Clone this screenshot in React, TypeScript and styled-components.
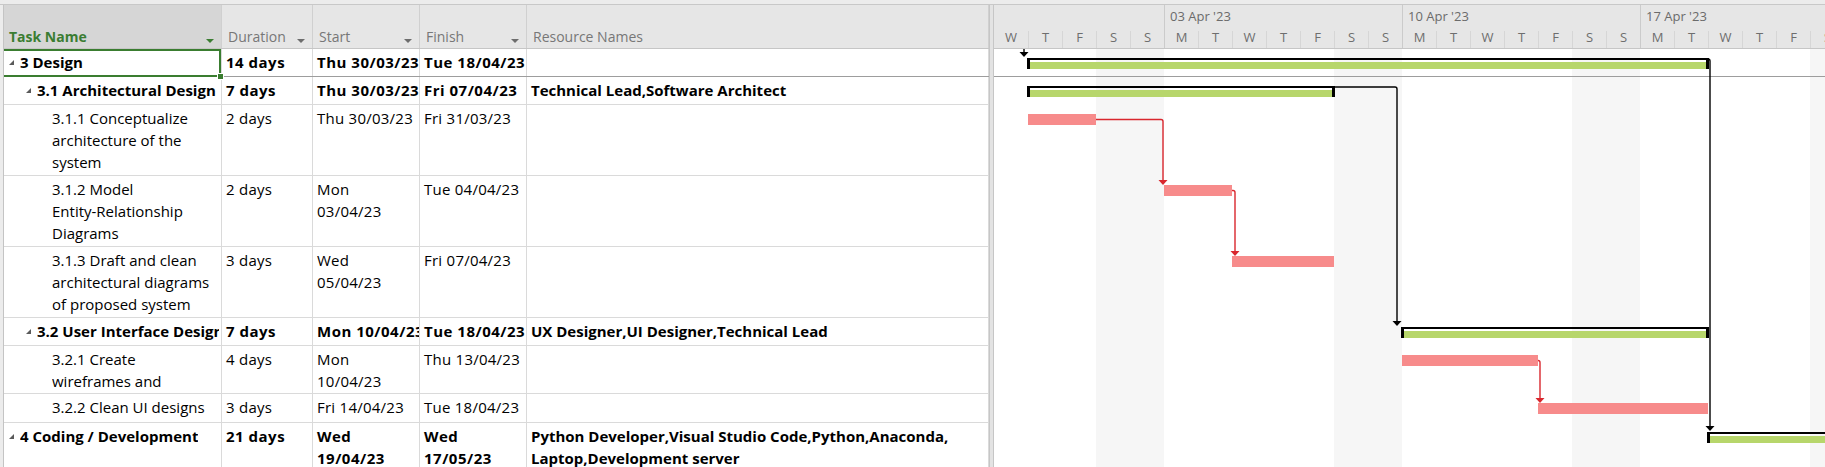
import React from 'react';
import styled, { createGlobalStyle, css } from 'styled-components';

const FONT = `'Open Sans', 'Noto Sans', 'Liberation Sans', sans-serif`;
const DAY_W = 34;
const COLS = '218px 91px 107px 107px 462px';

type Level = 0 | 1 | 2;

type TaskRow = {
  name: string[];
  level: Level;
  summary: boolean;
  duration: string;
  start: string[];
  finish: string[];
  resources: string[];
  height: number;
  dark?: boolean;
  selected?: boolean;
};

const rows: TaskRow[] = [
  { name: ['3 Design'], level: 0, summary: true, duration: '14 days', start: ['Thu 30/03/23'], finish: ['Tue 18/04/23'], resources: [], height: 28, dark: true, selected: true },
  { name: ['3.1 Architectural Design'], level: 1, summary: true, duration: '7 days', start: ['Thu 30/03/23'], finish: ['Fri 07/04/23'], resources: ['Technical Lead,Software Architect'], height: 28 },
  { name: ['3.1.1 Conceptualize', 'architecture of the', 'system'], level: 2, summary: false, duration: '2 days', start: ['Thu 30/03/23'], finish: ['Fri 31/03/23'], resources: [], height: 71 },
  { name: ['3.1.2 Model', 'Entity-Relationship', 'Diagrams'], level: 2, summary: false, duration: '2 days', start: ['Mon', '03/04/23'], finish: ['Tue 04/04/23'], resources: [], height: 71 },
  { name: ['3.1.3 Draft and clean', 'architectural diagrams', 'of proposed system'], level: 2, summary: false, duration: '3 days', start: ['Wed', '05/04/23'], finish: ['Fri 07/04/23'], resources: [], height: 71 },
  { name: ['3.2 User Interface Design'], level: 1, summary: true, duration: '7 days', start: ['Mon 10/04/23'], finish: ['Tue 18/04/23'], resources: ['UX Designer,UI Designer,Technical Lead'], height: 28 },
  { name: ['3.2.1 Create', 'wireframes and'], level: 2, summary: false, duration: '4 days', start: ['Mon', '10/04/23'], finish: ['Thu 13/04/23'], resources: [], height: 48 },
  { name: ['3.2.2 Clean UI designs'], level: 2, summary: false, duration: '3 days', start: ['Fri 14/04/23'], finish: ['Tue 18/04/23'], resources: [], height: 29 },
  { name: ['4 Coding / Development'], level: 0, summary: true, duration: '21 days', start: ['Wed', '19/04/23'], finish: ['Wed', '17/05/23'], resources: ['Python Developer,Visual Studio Code,Python,Anaconda,', 'Laptop,Development server'], height: 60 },
];

// row tops inside the chart body
const tops = rows.reduce<number[]>((acc, r, i) => {
  acc.push(i === 0 ? 0 : acc[i - 1] + rows[i - 1].height);
  return acc;
}, []);

const DAY_LETTERS = 'WTFSSMTWTFSSMTWTFSSMTWTFS'.split('');
const isWeekend = (i: number) => DAY_LETTERS[i] === 'S';

const weeks = [
  { days: 5, label: '' },
  { days: 7, label: "03 Apr '23" },
  { days: 7, label: "10 Apr '23" },
  { days: 7, label: "17 Apr '23" },
];

const summaries = [
  { row: 0, x1: 34, x2: 714 },
  { row: 1, x1: 34, x2: 340 },
  { row: 5, x1: 408, x2: 714 },
  { row: 8, x1: 714, x2: 1000 },
];

const tasks = [
  { row: 2, x1: 34, x2: 102 },
  { row: 3, x1: 170, x2: 238 },
  { row: 4, x1: 238, x2: 340 },
  { row: 6, x1: 408, x2: 544 },
  { row: 7, x1: 544, x2: 714 },
];

const links = [
  { from: 0, to: 8, x: 715, vx: 716, summary: true },
  { from: 1, to: 5, x: 341, vx: 403, summary: true },
  { from: 2, to: 3, x: 102, vx: 169, summary: false },
  { from: 3, to: 4, x: 238, vx: 241, summary: false },
  { from: 6, to: 7, x: 544, vx: 546, summary: false },
];

const GlobalStyle = createGlobalStyle`
  html, body { margin: 0; padding: 0; background: #ffffff; }
  body { font-family: ${FONT}; overflow: hidden; }
`;

const Frame = styled.div`
  width: 1825px;
  height: 467px;
  overflow: hidden;
  display: flex;
  flex-direction: column;
  background: #ffffff;
  font-family: ${FONT};
`;

const TopBand = styled.div`
  flex: none;
  height: 4px;
  background: #ececec;
  border-bottom: 1px solid #c8c8c8;
`;

const Main = styled.div`
  flex: 1;
  min-height: 0;
  display: flex;
`;

const Gutter = styled.div`
  flex: none;
  width: 3px;
  background: #ececec;
  border-right: 1px solid #c4c4c4;
`;

const TablePane = styled.div`
  flex: none;
  width: 985px;
  display: flex;
  flex-direction: column;
  overflow: hidden;
`;

const HeaderRow = styled.div`
  flex: none;
  display: grid;
  grid-template-columns: ${COLS};
  height: 44px;
  box-sizing: border-box;
  background: #e6e6e6;
  border-bottom: 1px solid #c6c6c6;
`;

const HeaderCell = styled.div<{ $active?: boolean }>`
  display: flex;
  align-items: flex-end;
  justify-content: space-between;
  padding: 0 7px 1px 6px;
  border-right: 1px solid #d0d0d0;
  font-size: 14px;
  line-height: 20px;
  color: #777777;
  white-space: nowrap;
  ${({ $active }) =>
    $active &&
    css`
      padding-left: 5px;
      background: #d6d6d6;
      color: #3b7d32;
      font-weight: 700;
    `}
`;

const SortArrow = styled.span<{ $color: string }>`
  flex: none;
  width: 0;
  height: 0;
  margin-bottom: 4px;
  border-left: 4px solid transparent;
  border-right: 4px solid transparent;
  border-top: 4px solid ${({ $color }) => $color};
`;

const Row = styled.div<{ $height: number; $dark?: boolean }>`
  flex: none;
  display: grid;
  grid-template-columns: ${COLS};
  height: ${({ $height }) => $height}px;
  box-sizing: border-box;
  border-bottom: 1px solid ${({ $dark }) => ($dark ? '#9d9d9d' : '#dadada')};
`;

const Cell = styled.div<{ $bold?: boolean; $numeric?: boolean }>`
  min-width: 0;
  padding: 2px 4px 0;
  overflow: hidden;
  white-space: nowrap;
  font-size: 15px;
  line-height: 22px;
  color: #000000;
  font-weight: ${({ $bold }) => ($bold ? 700 : 400)};
  letter-spacing: ${({ $bold, $numeric }) => ($numeric ? ($bold ? '0.5px' : '0.25px') : 'normal')};
  border-right: 1px solid #dadada;
`;

const NameCell = styled.div<{ $indent: number; $bold?: boolean; $selected?: boolean }>`
  position: relative;
  min-width: 0;
  display: flex;
  align-items: flex-start;
  padding: 2px 2px 0 ${({ $indent }) => $indent}px;
  font-size: 15px;
  line-height: 22px;
  color: #000000;
  font-weight: ${({ $bold }) => ($bold ? 700 : 400)};
  border-right: 1px solid #dadada;
  ${({ $selected }) =>
    $selected &&
    css`
      box-shadow: inset 0 0 0 2px #3a7d30;
      margin: 0 0 -1px -2px;
      padding-left: 7px;
    `}
`;

const NameText = styled.div`
  min-width: 0;
  overflow: hidden;
  white-space: nowrap;
`;

const Handle = styled.span`
  position: absolute;
  right: -3px;
  bottom: -3px;
  z-index: 2;
  width: 5px;
  height: 5px;
  background: #3a7d30;
  border: 1px solid #ffffff;
`;

const Expander = styled.svg`
  flex: none;
  width: 5px;
  height: 5px;
  margin: 9px 6px 0 0;
`;

const Splitter = styled.div`
  flex: none;
  width: 3px;
  background: #e3e3e3;
  border-left: 1px solid #c6c6c6;
  border-right: 1px solid #c6c6c6;
`;

const GanttPane = styled.div`
  flex: 1;
  min-width: 0;
  display: flex;
  flex-direction: column;
  overflow: hidden;
`;

const GanttHeader = styled.div`
  flex: none;
  height: 44px;
  box-sizing: border-box;
  display: flex;
  flex-direction: column;
  background: #e6e6e6;
  border-bottom: 1px solid #c6c6c6;
`;

const WeekTier = styled.div`
  flex: none;
  height: 26px;
  display: flex;
`;

const WeekCell = styled.div<{ $days: number; $edge: boolean }>`
  flex: none;
  width: ${({ $days }) => $days * DAY_W}px;
  box-sizing: border-box;
  padding: 3px 0 0 5px;
  font-size: 13px;
  line-height: 16px;
  color: #6b6b6b;
  white-space: nowrap;
  border-left: ${({ $edge }) => ($edge ? '1px solid #cbcbcb' : 'none')};
`;

const DayTier = styled.div`
  flex: 1;
  display: flex;
`;

const DayCell = styled.div<{ $edge: 'none' | 'day' | 'week' }>`
  flex: none;
  width: ${DAY_W}px;
  box-sizing: border-box;
  text-align: center;
  font-size: 13px;
  line-height: 12px;
  color: #6e6e6e;
  border-left: ${({ $edge }) =>
    $edge === 'none' ? 'none' : `1px solid ${$edge === 'week' ? '#cbcbcb' : '#d6d6d6'}`};
`;

const GanttBody = styled.div`
  position: relative;
  flex: 1;
  min-height: 0;
`;

const DayColumns = styled.div`
  display: flex;
  height: 100%;
`;

const DayColumn = styled.div<{ $weekend: boolean }>`
  flex: none;
  width: ${DAY_W}px;
  height: 100%;
  background: ${({ $weekend }) => ($weekend ? '#f6f6f6' : '#ffffff')};
`;

const Chart = styled.svg`
  position: absolute;
  top: 0;
  left: 0;
`;

const Lines = ({ lines }: { lines: string[] }) => (
  <>
    {lines.map((l) => (
      <div key={l}>{l}</div>
    ))}
  </>
);

const indentFor = (r: TaskRow) => (r.level === 0 ? 5 : r.level === 1 ? 22 : 48);

const TableRow = ({ row }: { row: TaskRow }) => (
  <Row $height={row.height} $dark={row.dark}>
    <NameCell $indent={indentFor(row)} $bold={row.summary} $selected={row.selected}>
      {row.summary && (
        <Expander viewBox="0 0 5 5">
          <polygon points="5,0 5,5 0,5" fill="#5a5a5a" />
        </Expander>
      )}
      <NameText>
        <Lines lines={row.name} />
      </NameText>
      {row.selected && <Handle />}
    </NameCell>
    <Cell $bold={row.summary} $numeric>
      {row.duration}
    </Cell>
    <Cell $bold={row.summary} $numeric>
      <Lines lines={row.start} />
    </Cell>
    <Cell $bold={row.summary} $numeric>
      <Lines lines={row.finish} />
    </Cell>
    <Cell $bold={row.summary}>
      <Lines lines={row.resources} />
    </Cell>
  </Row>
);

const SummaryBar = ({ x1, x2, y }: { x1: number; x2: number; y: number }) => (
  <g shapeRendering="crispEdges">
    <rect x={x1 - 1} y={y + 9} width={x2 - x1 + 2} height={2} fill="#000" />
    <rect x={x1 + 1} y={y + 13} width={x2 - x1 - 2} height={7} fill="#b7d66b" />
    <rect x={x1 - 1} y={y + 9} width={3} height={11} fill="#000" />
    <rect x={x2 - 2} y={y + 9} width={3} height={11} fill="#000" />
  </g>
);

const Link = ({ x, y, vx, tip, color }: { x: number; y: number; vx: number; tip: number; color: string }) => (
  <g>
    <path
      d={`M ${x} ${y} H ${vx - 2} Q ${vx} ${y} ${vx} ${y + 2} V ${tip - 4}`}
      fill="none"
      stroke={color}
      strokeWidth={1.4}
    />
    <polygon points={`${vx - 4.5},${tip - 5} ${vx + 4.5},${tip - 5} ${vx},${tip}`} fill={color} />
  </g>
);

const GanttChart = () => {
  const width = DAY_LETTERS.length * DAY_W;
  return (
    <Chart width={width} height={420} viewBox={`0 0 ${width} 420`}>
      <line x1={0} x2={width} y1={27.5} y2={27.5} stroke="#9d9d9d" strokeWidth={1} />
      {/* predecessor coming from above the visible area */}
      <Link x={30} y={-4} vx={30} tip={8} color="#000" />
      {summaries.map((s) => (
        <SummaryBar key={s.row} x1={s.x1} x2={s.x2} y={tops[s.row]} />
      ))}
      {tasks.map((t) => (
        <rect
          key={t.row}
          x={t.x1}
          y={tops[t.row] + 9}
          width={t.x2 - t.x1}
          height={11}
          fill="#f78b8b"
          shapeRendering="crispEdges"
        />
      ))}
      {links.map((l) => (
        <Link
          key={l.from}
          x={l.x}
          y={tops[l.from] + (l.summary ? 10 : 14.5)}
          vx={l.vx}
          tip={tops[l.to] + (rows[l.to].summary ? 8 : 9)}
          color={l.summary ? '#000' : '#d9272e'}
        />
      ))}
    </Chart>
  );
};

const App = () => (
  <>
    <GlobalStyle />
    <Frame>
      <TopBand />
      <Main>
        <Gutter />
        <TablePane>
          <HeaderRow>
            <HeaderCell $active>
              <span>Task Name</span>
              <SortArrow $color="#3b7d32" />
            </HeaderCell>
            <HeaderCell>
              <span>Duration</span>
              <SortArrow $color="#6d6d6d" />
            </HeaderCell>
            <HeaderCell>
              <span>Start</span>
              <SortArrow $color="#6d6d6d" />
            </HeaderCell>
            <HeaderCell>
              <span>Finish</span>
              <SortArrow $color="#6d6d6d" />
            </HeaderCell>
            <HeaderCell>
              <span>Resource Names</span>
            </HeaderCell>
          </HeaderRow>
          {rows.map((r) => (
            <TableRow key={r.name[0]} row={r} />
          ))}
        </TablePane>
        <Splitter />
        <GanttPane>
          <GanttHeader>
            <WeekTier>
              {weeks.map((w, i) => (
                <WeekCell key={i} $days={w.days} $edge={i > 0}>
                  {w.label}
                </WeekCell>
              ))}
            </WeekTier>
            <DayTier>
              {DAY_LETTERS.map((d, i) => (
                <DayCell key={i} $edge={i === 0 ? 'none' : d === 'M' ? 'week' : 'day'}>
                  {d}
                </DayCell>
              ))}
            </DayTier>
          </GanttHeader>
          <GanttBody>
            <DayColumns>
              {DAY_LETTERS.map((d, i) => (
                <DayColumn key={i} $weekend={isWeekend(i)} />
              ))}
            </DayColumns>
            <GanttChart />
          </GanttBody>
        </GanttPane>
      </Main>
    </Frame>
  </>
);

export default App;
